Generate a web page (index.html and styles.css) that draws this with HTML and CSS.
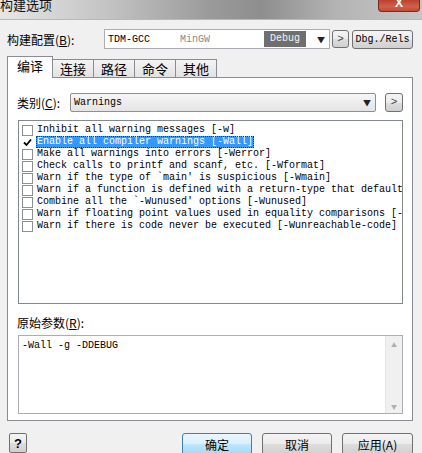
FILE: index.html
```html
<!DOCTYPE html>
<html lang="zh-CN">
<head>
    <meta charset="UTF-8">
    <title>构建选项</title>
    <link rel="stylesheet" href="styles.css">
</head>
<body>
    <div class="titlebar">
        <span class="title">构建选项</span>
        <span class="close">X</span>
    </div>

    <div class="config-row">
        <label class="config-label">构建配置(<u>B</u>):</label>
        <div class="combo config-combo">
            <span class="mono cfg-name">TDM-GCC</span>
            <span class="mono cfg-kind">MinGW</span>
            <span class="mono cfg-mode">Debug</span>
            <span class="arrow">&#9660;</span>
        </div>
        <button class="btn btn-next">&gt;</button>
        <button class="btn btn-dbg mono">Dbg./Rels</button>
    </div>

    <div class="tabs">
        <div class="tab active">编译</div>
        <div class="tab">连接</div>
        <div class="tab">路径</div>
        <div class="tab">命令</div>
        <div class="tab">其他</div>
    </div>

    <div class="panel">
        <div class="category-row">
            <label class="category-label">类别(<u>C</u>):</label>
            <div class="combo category-combo">
                <span class="mono">Warnings</span>
                <span class="arrow">&#9660;</span>
            </div>
            <button class="btn btn-next">&gt;</button>
        </div>

        <div class="listbox mono">
            <div class="item"><span class="check"></span><span class="text">Inhibit all warning messages [-w]</span></div>
            <div class="item"><span class="check"><svg width="9" height="9" viewBox="0 0 9 9"><path d="M1 4.5 L3.5 7 L8 1.5" fill="none" stroke="#000" stroke-width="1.8"/></svg></span><span class="text selected">Enable all compiler warnings [-Wall]</span></div>
            <div class="item"><span class="check"></span><span class="text">Make all warnings into errors [-Werror]</span></div>
            <div class="item"><span class="check"></span><span class="text">Check calls to printf and scanf, etc. [-Wformat]</span></div>
            <div class="item"><span class="check"></span><span class="text">Warn if the type of `main' is suspicious [-Wmain]</span></div>
            <div class="item"><span class="check"></span><span class="text">Warn if a function is defined with a return-type that defaults to int [-Wreturn-type]</span></div>
            <div class="item"><span class="check"></span><span class="text">Combine all the `-Wunused' options [-Wunused]</span></div>
            <div class="item"><span class="check"></span><span class="text">Warn if floating point values used in equality comparisons [-Wfloat-equal]</span></div>
            <div class="item"><span class="check"></span><span class="text">Warn if there is code never be executed [-Wunreachable-code]</span></div>
        </div>

        <label class="raw-label">原始参数(<u>R</u>):</label>
        <div class="textarea">
            <span class="mono raw-text">-Wall -g -DDEBUG</span>
            <div class="scrollbar">
                <span>&#9650;</span>
                <span>&#9660;</span>
            </div>
        </div>
    </div>

    <div class="bottom-row">
        <button class="btn btn-help">?</button>
        <div class="actions">
            <button class="btn btn-action default">确定</button>
            <button class="btn btn-action">取消</button>
            <button class="btn btn-action">应用(A)</button>
        </div>
    </div>
</body>
</html>
```

FILE: styles.css
```css
body {
    margin: 0;
    width: 422px;
    height: 453px;
    overflow: hidden;
    background: #f0f0f0;
    color: #000;
    font-family: "Noto Sans CJK SC", "Noto Sans", sans-serif;
    font-size: 12px;
}
u {
    text-decoration: underline;
}
.mono {
    font-family: "Liberation Mono", "DejaVu Sans Mono", monospace;
    font-size: 10px;
}

/* 標題列 */
.titlebar {
    height: 19px;
    display: flex;
    justify-content: space-between;
    align-items: flex-start;
    background: linear-gradient(to right, #e6e6e6 0%, #c4c4c4 25%, #9a9a9a 50%, #8e8e8e 62%, #b4b4b4 80%, #c6c6c6 100%);
    border-bottom: 1px solid #b8b8b8;
}
.title {
    font-size: 13px;
    line-height: 16px;
    margin-top: -3px;
    color: #111;
}
.close {
    width: 42px;
    height: 12px;
    margin-right: 2px;
    border: 1px solid #7a2a20;
    border-top: none;
    border-radius: 0 0 4px 4px;
    background: linear-gradient(#b8432f, #d2604a 60%, #c04a35);
    color: #fff;
    font-weight: bold;
    font-family: "Liberation Sans", sans-serif;
    font-size: 12px;
    line-height: 6px;
    text-align: center;
    box-sizing: border-box;
    overflow: hidden;
}

/* 構建配置 */
.config-row {
    display: flex;
    align-items: center;
    height: 20px;
    margin-top: 9px;
    padding-left: 7px;
}
.config-label {
    width: 97px;
}
.combo {
    display: flex;
    align-items: center;
    height: 20px;
    box-sizing: border-box;
    border: 1px solid #abadb3;
    background: #fff;
    position: relative;
}
.config-combo {
    width: 226px;
    padding-left: 3px;
}
.cfg-name {
    width: 72px;
}
.cfg-kind {
    width: 84px;
    color: #8a8a8a;
}
.cfg-mode {
    width: 42px;
    height: 16px;
    line-height: 16px;
    text-align: center;
    background: #6f6f6f;
    color: #f4f4f4;
}
.arrow {
    position: absolute;
    right: 4px;
    font-size: 8px;
    color: #222;
}
.btn {
    box-sizing: border-box;
    border: 1px solid #707070;
    border-radius: 3px;
    background: linear-gradient(#f4f4f4 0%, #ebebeb 50%, #dddddd 51%, #d0d0d0 100%);
    font-family: "Noto Sans CJK SC", sans-serif;
    font-size: 12px;
    color: #000;
    padding: 0;
}
.btn-next {
    width: 17px;
    height: 18px;
    margin-left: 2px;
    font-family: "Liberation Mono", monospace;
    font-size: 11px;
    color: #444;
}
.btn-dbg {
    width: 61px;
    height: 19px;
    margin-left: 3px;
    font-family: "Liberation Mono", monospace;
    font-size: 10px;
}

/* 分頁 */
.tabs {
    display: flex;
    align-items: flex-end;
    height: 21px;
    margin-top: 7px;
    padding-left: 7px;
}
.tab {
    box-sizing: border-box;
    width: 41px;
    height: 18px;
    border: 1px solid #898c95;
    border-bottom: none;
    border-left: none;
    background: linear-gradient(#f4f4f4, #e2e2e2);
    font-size: 13px;
    line-height: 17px;
    text-align: center;
}
.tab.active {
    width: 46px;
    height: 22px;
    margin-bottom: -1px;
    border-left: 1px solid #898c95;
    background: #fff;
    position: relative;
    z-index: 1;
    line-height: 18px;
}

.panel {
    box-sizing: border-box;
    width: 406px;
    height: 344px;
    margin-left: 7px;
    padding: 14px 9px 0 10px;
    border: 1px solid #898c95;
    background: #fff;
}
.category-row {
    display: flex;
    align-items: center;
    height: 20px;
}
.category-label {
    width: 52px;
    margin-left: -1px;
    margin-right: 1px;
}
.category-combo {
    width: 306px;
    height: 19px;
    padding-left: 3px;
    background: linear-gradient(#f6f6f6, #e4e4e4);
    border-color: #8e8f8f;
    border-radius: 2px;
}
.category-row .btn-next {
    width: 18px;
    height: 19px;
    margin-left: 9px;
}

/* 警告選項清單 */
.listbox {
    box-sizing: border-box;
    width: 385px;
    height: 184px;
    margin-top: 8px;
    padding: 3px 0 0 3px;
    border: 1px solid #828790;
    overflow: hidden;
}
.item {
    display: flex;
    align-items: center;
    height: 12px;
    white-space: nowrap;
}
.check {
    box-sizing: border-box;
    width: 11px;
    height: 11px;
    border: 1px solid #8e8f8f;
    background: #fff;
    margin-right: 3px;
    display: flex;
    align-items: center;
    justify-content: center;
    flex: none;
}
.item:nth-child(2) .check {
    border-color: #fff;
}
.text {
    line-height: 12px;
    padding: 0 1px;
}
.text.selected {
    background: #3399ff;
    color: #fff;
    outline: 1px dotted #0c3e79;
    outline-offset: -1px;
}

.raw-label {
    display: block;
    line-height: 16px;
    margin: 11px 0 4px -1px;
}
.textarea {
    box-sizing: border-box;
    width: 385px;
    height: 79px;
    border: 1px solid #abadb3;
    display: flex;
    justify-content: space-between;
}
.raw-text {
    padding: 4px 0 0 3px;
    line-height: 12px;
}
.scrollbar {
    width: 17px;
    background: #f0f0f0;
    border-left: 1px solid #e6e6e6;
    display: flex;
    flex-direction: column;
    justify-content: space-between;
    align-items: center;
    font-size: 6px;
    color: #b0b0b0;
    padding: 4px 0 2px;
    box-sizing: border-box;
}

/* 底部按鈕 */
.bottom-row {
    display: flex;
    justify-content: space-between;
    margin-top: 12px;
    padding: 0 9px 0 9px;
}
.btn-help {
    width: 18px;
    height: 20px;
    font-family: "Liberation Sans", sans-serif;
    font-weight: bold;
    font-size: 13px;
    border-radius: 2px;
}
.actions {
    display: flex;
    gap: 10px;
}
.btn-action {
    width: 70px;
    height: 22px;
}
.btn-action:last-child {
    width: 71px;
}
.btn-action.default {
    border-color: #3c7fb1;
    background: linear-gradient(#eaf6fd 0%, #d9f0fc 50%, #bee6fd 51%, #a7d9f5 100%);
}
```
